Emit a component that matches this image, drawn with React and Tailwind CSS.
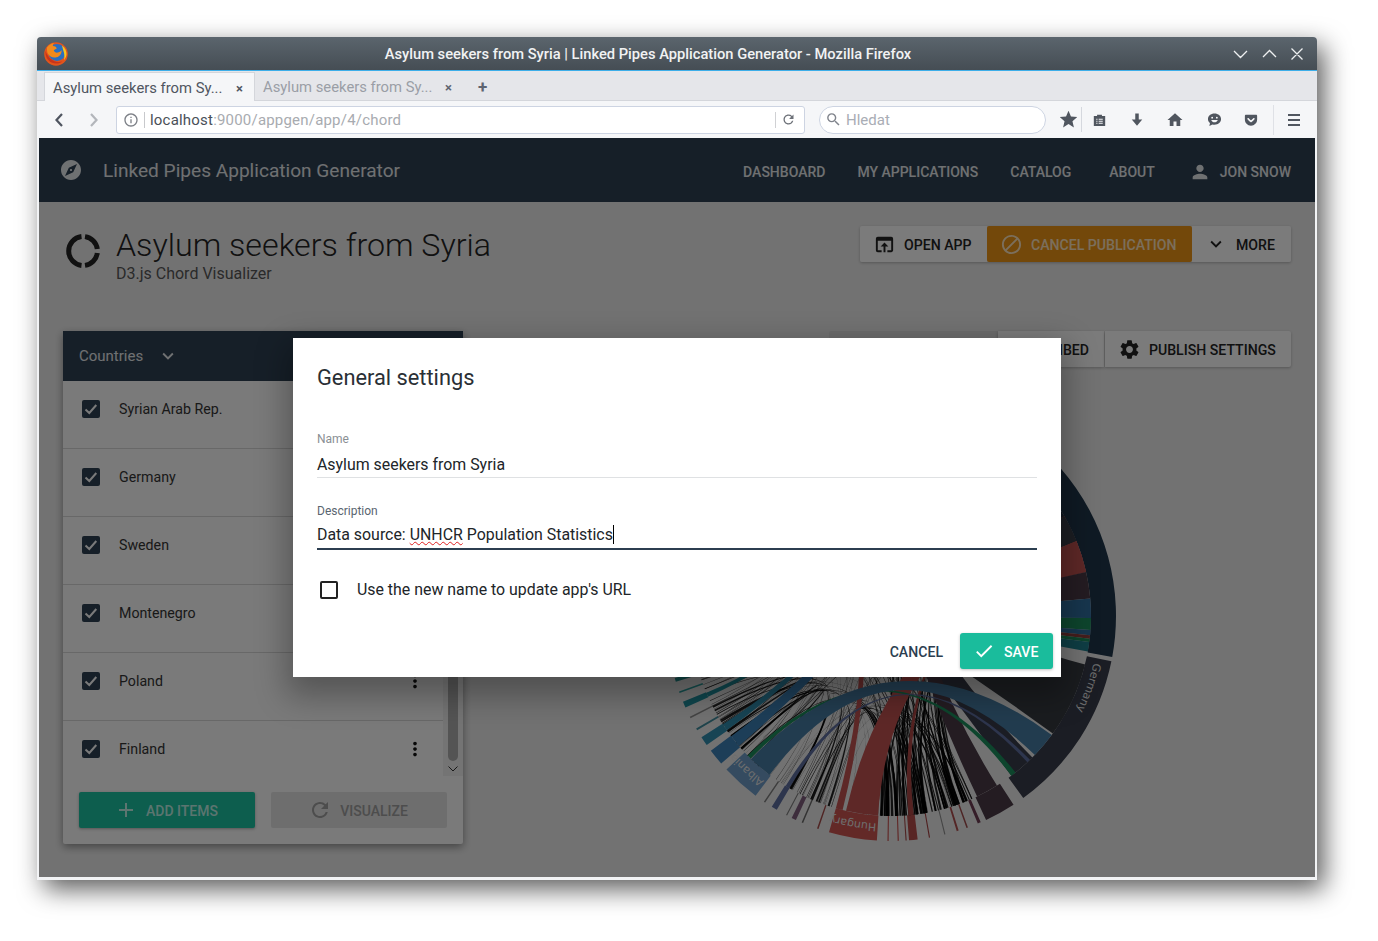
import { MdExplore, MdPerson, MdSettings, MdOpenInBrowser, MdBlock, MdExpandMore, MdAdd, MdRefresh, MdMoreVert, MdCheck, MdStar, MdHome, MdSearch, MdInfoOutline } from "react-icons/md";
import { FaGetPocket } from "react-icons/fa";

const countries = ["Syrian Arab Rep.", "Germany", "Sweden", "Montenegro", "Poland", "Finland"];

// ── chord chart helpers ────────────────────────────────────────────
const pt = (r, deg) => {
  const a = (deg * Math.PI) / 180;
  return `${(r * Math.cos(a)).toFixed(2)} ${(r * Math.sin(a)).toFixed(2)}`;
};
const arcPath = (r, a0, a1) => `M${pt(r, a0)} A${r} ${r} 0 ${a1 - a0 > 180 ? 1 : 0} 1 ${pt(r, a1)}`;
const ringPath = (a0, a1, r0 = 200, r1 = 225) =>
  `M${pt(r1, a0)} A${r1} ${r1} 0 0 1 ${pt(r1, a1)} L${pt(r0, a1)} A${r0} ${r0} 0 0 0 ${pt(r0, a0)} Z`;
const ribbonPath = (a0, a1, b0, b1, r = 200) =>
  `M${pt(r, a0)} A${r} ${r} 0 0 1 ${pt(r, a1)} Q0 0 ${pt(r, b0)} A${r} ${r} 0 0 1 ${pt(r, b1)} Q0 0 ${pt(r, a0)} Z`;

const rings = [
  [-41, 10.5, "#1e3448"],
  [11.6, 54, "#363a48"],
  [57, 65, "#483844"],
  [66.5, 67.3, "#6a3a50"],
  [70, 70.4, "#9a4a4a"],
  [72.5, 73, "#a84a4a"],
  [76, 76.3, "#8a8a8a"],
  [80, 80.3, "#a04040"],
  [83.2, 85.4, "#b04a48"],
  [86, 86.3, "#a04a48"],
  [88, 88.3, "#c04a48"],
  [90.6, 90.9, "#c04a48"],
  [93.6, 106, "#c6524f"],
  [108.8, 109.2, "#a04a48"],
  [113, 113.4, "#666666"],
  [115, 116.2, "#7a5a78"],
  [117.5, 117.8, "#7a7a7a"],
  [120.5, 122, "#5a6a9a"],
  [124, 124.4, "#7a7a7a"],
  [127, 137, "#6a96c0"],
  [139, 143.2, "#3a7cb0"],
  [145, 147.4, "#2f88a8"],
  [149.5, 150, "#3f8898"],
  [153, 153.4, "#8a8a8a"],
  [156, 157.6, "#1f8c9a"],
  [160, 160.4, "#2a9a9a"],
  [163, 164, "#1f8c8a"],
];

const ribbons = [
  [14, 36, -150, -120, "#34383f"],
  [45, 53, -125, -105, "#363a48"],
  [58, 64.5, -100, -92, "#483844"],
  [-40, -22, -160, -140, "#1a2a3c"],
  [-22, -12.7, 93.7, 103, "#bc504e"],
  [104, 106, -110, -105.5, "#bc504e"],
  [83.5, 85, -30, -29, "#a84442"],
  [134.6, 135.8, 51.5, 53, "#1a8a5a"],
  [139.5, 143, -62, -58, "#3a7cb0"],
  [145.2, 147.2, -72, -70, "#2f88a8"],
  [156.2, 157.4, -86, -85, "#1f8c9a"],
  [163.2, 163.9, -95, -94.5, "#1f8c8a"],
  [120.6, 121.8, 46, 47, "#5a6a9a"],
  [127.4, 134.4, 36.5, 44, "#44789f"],
];

// ends of the chords that arrive on the right of the circle, above Germany
const wedges = [
  [-30, -22, "#383c46"],
  [-22, -12.7, "#bc504e"],
  [-12.7, -5, "#483844"],
  [-5, 0.6, "#2f6c9c"],
  [0.6, 4, "#1a8a5a"],
  [4, 5.5, "#2f6c9c"],
  [5.5, 6.5, "#8a3c3a"],
  [6.5, 7.5, "#1a8a5a"],
  [7.5, 10.2, "#1f7c8a"],
];

// thin black fan, same sequence on every render
const fan = [];
for (let i = 0; i < 170; i++) {
  const s1 = Math.abs(Math.sin(i * 12.9898) * 43758.5453) % 1;
  const s2 = Math.abs(Math.sin(i * 78.233) * 12543.123) % 1;
  const a = i % 2 === 0 ? 66 + s1 * 27 : 107 + s1 * 56;
  const w = i % 2 === 0 || i % 3 === 0 ? 0.2 + s2 * 0.5 : 0.05 + s2 * 0.12;
  const b = i % 3 === 0 ? 68 + s2 * 80 : -170 + s2 * 150;
  fan.push([a, a + w, b, b + 0.05]);
}

const sideLabels = [
  ["Germany", 13, 50],
  ["Hungary", 94, 120],
  ["Albania", 127.5, 150],
];

function ChordChart() {
  return (
    <svg viewBox="-240 -240 480 480" className="block w-[480px] h-[480px] ml-[164px] mt-[9px]">
      {rings.map(([a0, a1, c]) => (
        <path key={a0} d={ringPath(a0, a1)} fill={c} />
      ))}
      {fan.map(([a0, a1, b0, b1], i) => (
        <path key={i} d={ribbonPath(a0, a1, b0, b1)} fill="#000" fillOpacity="0.85" />
      ))}
      {ribbons.map(([a0, a1, b0, b1, c]) => (
        <path key={`${a0}${b0}`} d={ribbonPath(a0, a1, b0, b1)} fill={c} />
      ))}
      {wedges.map(([a0, a1, c]) => (
        <path key={a0} d={ringPath(a0, a1, 160, 200)} fill={c} />
      ))}
      <defs>
        {sideLabels.map(([name, a0, a1]) => (
          <path key={name} id={`lbl-${name}`} d={arcPath(208, a0, a1)} fill="none" />
        ))}
      </defs>
      {sideLabels.map(([name]) => (
        <text key={name} fill="#ddd" style={{ fontFamily: "'DejaVu Sans', sans-serif", fontSize: 11 }}>
          <textPath href={`#lbl-${name}`}>{name}</textPath>
        </text>
      ))}
    </svg>
  );
}

function FirefoxLogo() {
  return (
    <svg viewBox="0 0 24 24" className="w-[24px] h-[24px]">
      <circle cx="12" cy="12" r="11.800" fill="#e2541c" />
      <circle cx="13" cy="10.500" r="8.500" fill="#2a6fc0" />
      <path d="M18 3.500c3 2 4.800 5.500 4.500 9-.2 2-1 3.800-2.500 5.500 .8-3.500 .3-7-.7-9.500-.4-1.800-1-3.500-1.300-5z" fill="#f6c51f" />
      <path d="M3 5.500C5 2.500 8 1.200 10.500 1 9 2 8.500 3.200 9 4c1.500 0 3.500 .8 3.800 2.500-1.200 1-2.800 1-3 2 .5 1.500 2.200 2.500 4.200 2 2-.4 3-1.500 3.500-2.500 .5 3-1.500 6.500-5 7.300C8.500 16.500 5 14 3.500 11 3 9 2.800 7 3 5.500z" fill="#f28a1c" />
      <path d="M1.500 9c-.5 5 2 9.500 6 11.500 4 2 8.500 1 11-1-4 1-8.500 .5-11.500-2.500C4.500 15 2.800 12.500 1.500 9z" fill="#c9341a" />
    </svg>
  );
}

function ToolbarIcons() {
  return (
    <div className="flex items-center h-full text-[#50565f]">
      <MdStar size={21} className="ml-[12px]" />
      <div className="w-px h-[25px] bg-[#d5d8de] ml-[2px]" />
      <svg viewBox="0 0 16 16" className="w-[13px] h-[14px] ml-[11px]" fill="currentColor">
        <path d="M1 3h4V1.500h6V3h4v12.500H1zM4 6.500v1.200h1.500V6.500zm3 0v1.200h5V6.500zM4 9v1.200h1.500V9zm3 0v1.200h5V9zm-3 2.500v1.200h1.500v-1.200zm3 0v1.200h5v-1.200z" fillRule="evenodd" />
      </svg>
      <svg viewBox="0 0 16 16" className="w-[14px] h-[15px] ml-[24px]" fill="currentColor">
        <path d="M6 1h4v7h4l-6 7-6-7h4z" />
      </svg>
      <MdHome size={18} className="ml-[22px]" />
      <svg viewBox="0 0 16 16" className="w-[15px] h-[15px] ml-[23px]" fill="currentColor">
        <path fillRule="evenodd" d="M8 1.500c4 0 7 2.500 7 6s-3 6-7 6c-.8 0-1.500-.1-2.200-.3L2.500 15l.7-3.200C1.800 10.700 1 9.200 1 7.500c0-3.500 3-6 7-6zM5.500 5a1 1 0 100 2 1 1 0 000-2zm5 0a1 1 0 100 2 1 1 0 000-2zM4.500 8.500c.6 1.700 2 2.500 3.500 2.500s2.900-.8 3.500-2.500z" />
      </svg>
      <FaGetPocket size={14} className="ml-[22px]" />
      <div className="w-px h-[30px] bg-[#dfe1e6] ml-[15px]" />
      <div className="ml-[14px] w-[12px] flex flex-col gap-[3px]">
        <div className="h-[2px] bg-current" />
        <div className="h-[2px] bg-current" />
        <div className="h-[2px] bg-current" />
      </div>
    </div>
  );
}

function CheckedBox() {
  return (
    <div className="w-[18px] h-[18px] shrink-0 rounded-[2px] bg-[#2c3e50] flex items-center justify-center">
      <svg viewBox="0 0 18 18" className="w-[18px] h-[18px]" fill="none" stroke="#f4f4f4" strokeWidth="2">
        <path d="M3.500 9.500l3.800 3.500 7-8" />
      </svg>
    </div>
  );
}

export default function App() {
  return (
    <div className="w-[1378px] h-[941px] bg-white pt-[37px] pl-[37px] overflow-hidden" style={{ fontFamily: "Roboto, sans-serif" }}>
      {/* window */}
      <div className="w-[1280px] h-[843px] rounded-t-[4px] bg-[#f2f3f5] shadow-[7px_9px_26px_rgba(0,0,0,0.65)] overflow-hidden flex flex-col">
        <div className="h-[33px] shrink-0 bg-gradient-to-b from-[#5b656d] to-[#454d54] flex items-center relative">
          <div className="ml-[7px] mt-px"><FirefoxLogo /></div>
          <div className="absolute inset-x-0 pr-[58px] pt-[2px] text-center text-[14.700px] font-medium text-[#f1f2f3]">
            Asylum seekers from Syria | Linked Pipes Application Generator - Mozilla Firefox
          </div>
          <svg viewBox="0 0 80 16" className="absolute right-[9px] top-[9px] w-[80px] h-[16px]" fill="none" stroke="#eef0f1" strokeWidth="1.300">
            <path d="M6 5l6.500 6.500L19 5M35 11l6.500-6.500L48 11M63.500 2.500l11 11M74.500 2.500l-11 11" />
          </svg>
        </div>
        <div className="h-px shrink-0 bg-[#3daee9]" />

        {/* tabs */}
        <div className="h-[30px] shrink-0 bg-[#e5e6ea] border-b border-[#d4d6db] flex pl-[7px] text-[14.800px]">
          <div className="w-[211px] h-[30px] mt-px bg-[#f5f6f8] border-x border-t border-[#d4d6db] flex items-center pl-[8px] pt-[1px] text-[#4f5560]">
            <span className="w-[171px] whitespace-nowrap">Asylum seekers from Sy...</span>
            <span className="ml-[12px] text-[13px] font-bold leading-none">×</span>
          </div>
          <div className="w-[260px] flex items-center pl-[8px] pt-[3px] text-[#9a9ea6]">
            <span className="w-[170px] whitespace-nowrap">Asylum seekers from Sy...</span>
            <span className="ml-[12px] text-[13px] font-bold leading-none text-[#5e6470]">×</span>
            <span className="ml-[26px] text-[17px] font-bold leading-none text-[#5e6470]">+</span>
          </div>
        </div>

        {/* url bar */}
        <div className="h-[37px] shrink-0 bg-[#f5f6f8] flex items-center">
          <svg viewBox="0 0 46 16" className="ml-[16px] w-[46px] h-[16px]" fill="none" strokeWidth="2.200">
            <path d="M9 2L3.500 8 9 14" stroke="#4f5560" />
            <path d="M38 2l5.500 6-5.500 6" stroke="#b3b6bb" />
          </svg>
          <div className="ml-[17px] w-[689px] h-[28px] bg-white border border-[#cdd4e2] rounded-[3px] flex items-center text-[15px]">
            <MdInfoOutline size={16} className="ml-[6px] text-[#7d8087]" />
            <div className="w-px h-[16px] bg-[#c8c9cc] ml-[5px]" />
            <span className="ml-[5px] pt-px text-[#4a5058] tracking-[0.2px]">localhost</span>
            <span className="pt-px text-[#a8abb0] tracking-[0.2px]">:9000/appgen/app/4/chord</span>
            <div className="w-px h-[16px] bg-[#d0d1d4] ml-auto" />
            <MdRefresh size={15} className="ml-[5px] mr-[8px] text-[#6d7178]" />
          </div>
          <div className="ml-[14px] w-[227px] h-[28px] bg-white border border-[#cdd4e2] rounded-full flex items-center text-[15px] text-[#a9adb5]">
            <MdSearch size={17} className="ml-[5px] text-[#80848c]" />
            <span className="ml-[4px] pt-px">Hledat</span>
          </div>
          <ToolbarIcons />
        </div>

        {/* app */}
        <div className="relative flex-1 mx-[2px] mb-[3px] bg-[#e5e5e5] min-h-0">
          <div className="h-[64px] bg-[#2c3e50] flex items-center text-white/85">
            <MdExplore size={24} className="ml-[20px]" />
            <div className="ml-[20px] pt-[3px] text-[19.100px]">Linked Pipes Application Generator</div>
            <div className="ml-auto pt-[5px] flex items-center text-[14px] font-medium">
              <span>DASHBOARD</span>
              <span className="ml-[32px]">MY APPLICATIONS</span>
              <span className="ml-[32px]">CATALOG</span>
              <span className="ml-[38px]">ABOUT</span>
              <MdPerson size={22} className="ml-[34px] -mt-[2px]" />
              <span className="ml-[9px] mr-[24px]">JON SNOW</span>
            </div>
          </div>

          <div className="flex justify-between pl-[26px] pr-[24px] pt-[24px] h-[129px]">
            <div className="flex">
              <svg viewBox="0 0 36 36" className="w-[36px] h-[36px] mt-[7px]" fill="none" stroke="#222" strokeWidth="5">
                <path d="M16.500 3.600A14.500 14.500 0 0 0 16.500 32.400M20 3.600A14.500 14.500 0 0 1 32.300 16M32.300 20A14.500 14.500 0 0 1 20 32.400" />
              </svg>
              <div className="ml-[15px]">
                <div className="text-[32.200px] font-light text-[#222] leading-[38px]">Asylum seekers from Syria</div>
                <div className="text-[16px] text-[#555] leading-[20px]">D3.js Chord Visualizer</div>
              </div>
            </div>
            <div className="flex h-[36px] text-[14.100px] font-medium text-[#222] shadow-[0_1px_3px_rgba(0,0,0,0.25)] rounded-[2px]">
              <div className="w-[127px] bg-[#f6f6f6] flex items-center pl-[13px] rounded-l-[2px]">
                <MdOpenInBrowser size={23} />
                <span className="ml-[8px] pt-[3px]">OPEN APP</span>
              </div>
              <div className="w-[205px] bg-[#e69114] flex items-center pl-[13px] text-white rounded-[2px]">
                <MdBlock size={23} className="opacity-70" />
                <span className="ml-[8px] pt-[3px] opacity-70">CANCEL PUBLICATION</span>
              </div>
              <div className="w-[99px] bg-[#f6f6f6] flex items-center pl-[13px] rounded-r-[2px]">
                <MdExpandMore size={22} />
                <span className="ml-[9px] pt-[3px]">MORE</span>
              </div>
            </div>
          </div>

          <div className="flex pl-[24px] pr-[24px] gap-[24px]">
            {/* side panel */}
            <div className="w-[400px] h-[513px] shrink-0 bg-[#f4f4f4] rounded-b-[2px] shadow-[0_3px_8px_rgba(0,0,0,0.4)] flex flex-col">
              <div className="h-[50px] shrink-0 bg-[#2c3e50] flex items-center pl-[16px] text-white/85 text-[15px]">
                Countries
                <MdExpandMore size={22} className="ml-[14px]" />
              </div>
              <div className="flex h-[395px] shrink-0">
                <div className="flex-1">
                  {countries.map((name, i) => (
                    <div
                      key={name}
                      className={`h-[68px] flex items-center pl-[19px] pr-[17px] pb-[11px] text-[14.200px] text-[#333] border-b ${i < countries.length - 1 ? "border-[#d0d0d0]" : "border-transparent"}`}
                    >
                      <CheckedBox />
                      <span className="ml-[19px] pt-[2px]">{name}</span>
                      <MdMoreVert size={22} className="ml-auto text-[#111]" />
                    </div>
                  ))}
                </div>
                <div className="w-[20px] bg-[#e8e8e8] flex flex-col items-center">
                  <div className="w-[10px] h-[380px] rounded-b-full bg-[#a8a8a8]" />
                  <svg viewBox="0 0 10 6" className="w-[10px] h-[6px] mt-[5px]" fill="none" stroke="#333" strokeWidth="1">
                    <path d="M.5.500L5 5l4.500-4.500" />
                  </svg>
                </div>
              </div>
              <div className="flex justify-between px-[16px] pt-[16px] text-[14px] font-medium">
                <div className="w-[176px] h-[36px] pr-[2px] bg-[#1abc9c] text-white/70 rounded-[2px] shadow-[0_1px_3px_rgba(0,0,0,0.3)] flex items-center justify-center gap-[8px]">
                  <MdAdd size={24} />
                  <span className="pt-[3px]">ADD ITEMS</span>
                </div>
                <div className="w-[176px] h-[36px] pr-[2px] bg-[#dcdcdc] text-[#9a9a9a] rounded-[2px] flex items-center justify-center gap-[8px]">
                  <MdRefresh size={24} />
                  <span className="pt-[3px]">VISUALIZE</span>
                </div>
              </div>
            </div>

            {/* right column */}
            <div className="flex-1 min-w-0">
              <div className="flex justify-end h-[36px] text-[14.100px] font-medium text-[#222]">
                <div className="w-[169px] bg-[#d8d8d8] rounded-l-[2px]" />
                <div className="w-[106px] bg-[#f6f6f6] flex items-center justify-end pr-[15px] pt-[3px] shadow-[0_1px_3px_rgba(0,0,0,0.25)]">SUBSCRIBED</div>
                <div className="w-[186px] bg-[#f6f6f6] flex items-center pl-[13px] rounded-r-[2px] shadow-[0_1px_3px_rgba(0,0,0,0.25)] ml-px">
                  <MdSettings size={23} />
                  <span className="ml-[8px] pt-[3px]">PUBLISH SETTINGS</span>
                </div>
              </div>
              <ChordChart />
            </div>
          </div>

          {/* modal backdrop + dialog */}
          <div className="absolute inset-0 bg-black/50 pt-[200px] pl-[254px]">
            <div className="w-[768px] h-[339px] bg-white shadow-[0_13px_30px_6px_rgba(0,0,0,0.3)] pt-[25px] px-[24px] text-[15.900px] text-[#212529] flex flex-col">
              <div className="text-[21.800px] leading-[30px] text-[#2a2f35]">General settings</div>
              <div className="mt-[39px] text-[12px] leading-[14px] text-[#8a8f94]">Name</div>
              <div className="mt-[9px] h-[23px] leading-[20px] border-b border-[#dfe1e3]">Asylum seekers from Syria</div>
              <div className="mt-[26px] text-[12px] leading-[14px] text-[#5a6570]">Description</div>
              <div className="mt-[7px] h-[25px] leading-[20px] border-b-2 border-[#2c3e50] flex items-start">
                <span className="whitespace-pre">Data source: </span>
                <span className="underline decoration-wavy decoration-[#e02020] decoration-1 underline-offset-[1px]">UNHCR</span>
                <span className="whitespace-pre"> Population Statistics</span>
                <span className="w-px h-[19px] bg-black" />
              </div>
              <div className="mt-[28px] flex items-center pl-[3px]">
                <div className="w-[18px] h-[18px] border-2 border-[#222] rounded-[2px]" />
                <span className="ml-[19px]">Use the new name to update app's URL</span>
              </div>
              <div className="mt-auto mb-[8px] -mr-[16px] flex items-center justify-end text-[14.100px] font-medium">
                <span className="text-[#2c3e50] pt-[3px]">CANCEL</span>
                <div className="ml-[17px] w-[93px] h-[36px] bg-[#1abc9c] text-white rounded-[3px] shadow-[0_1px_3px_rgba(0,0,0,0.25)] flex items-center pl-[13px]">
                  <MdCheck size={22} />
                  <span className="ml-[9px] pt-[3px]">SAVE</span>
                </div>
              </div>
            </div>
          </div>
        </div>
      </div>
    </div>
  );
}
